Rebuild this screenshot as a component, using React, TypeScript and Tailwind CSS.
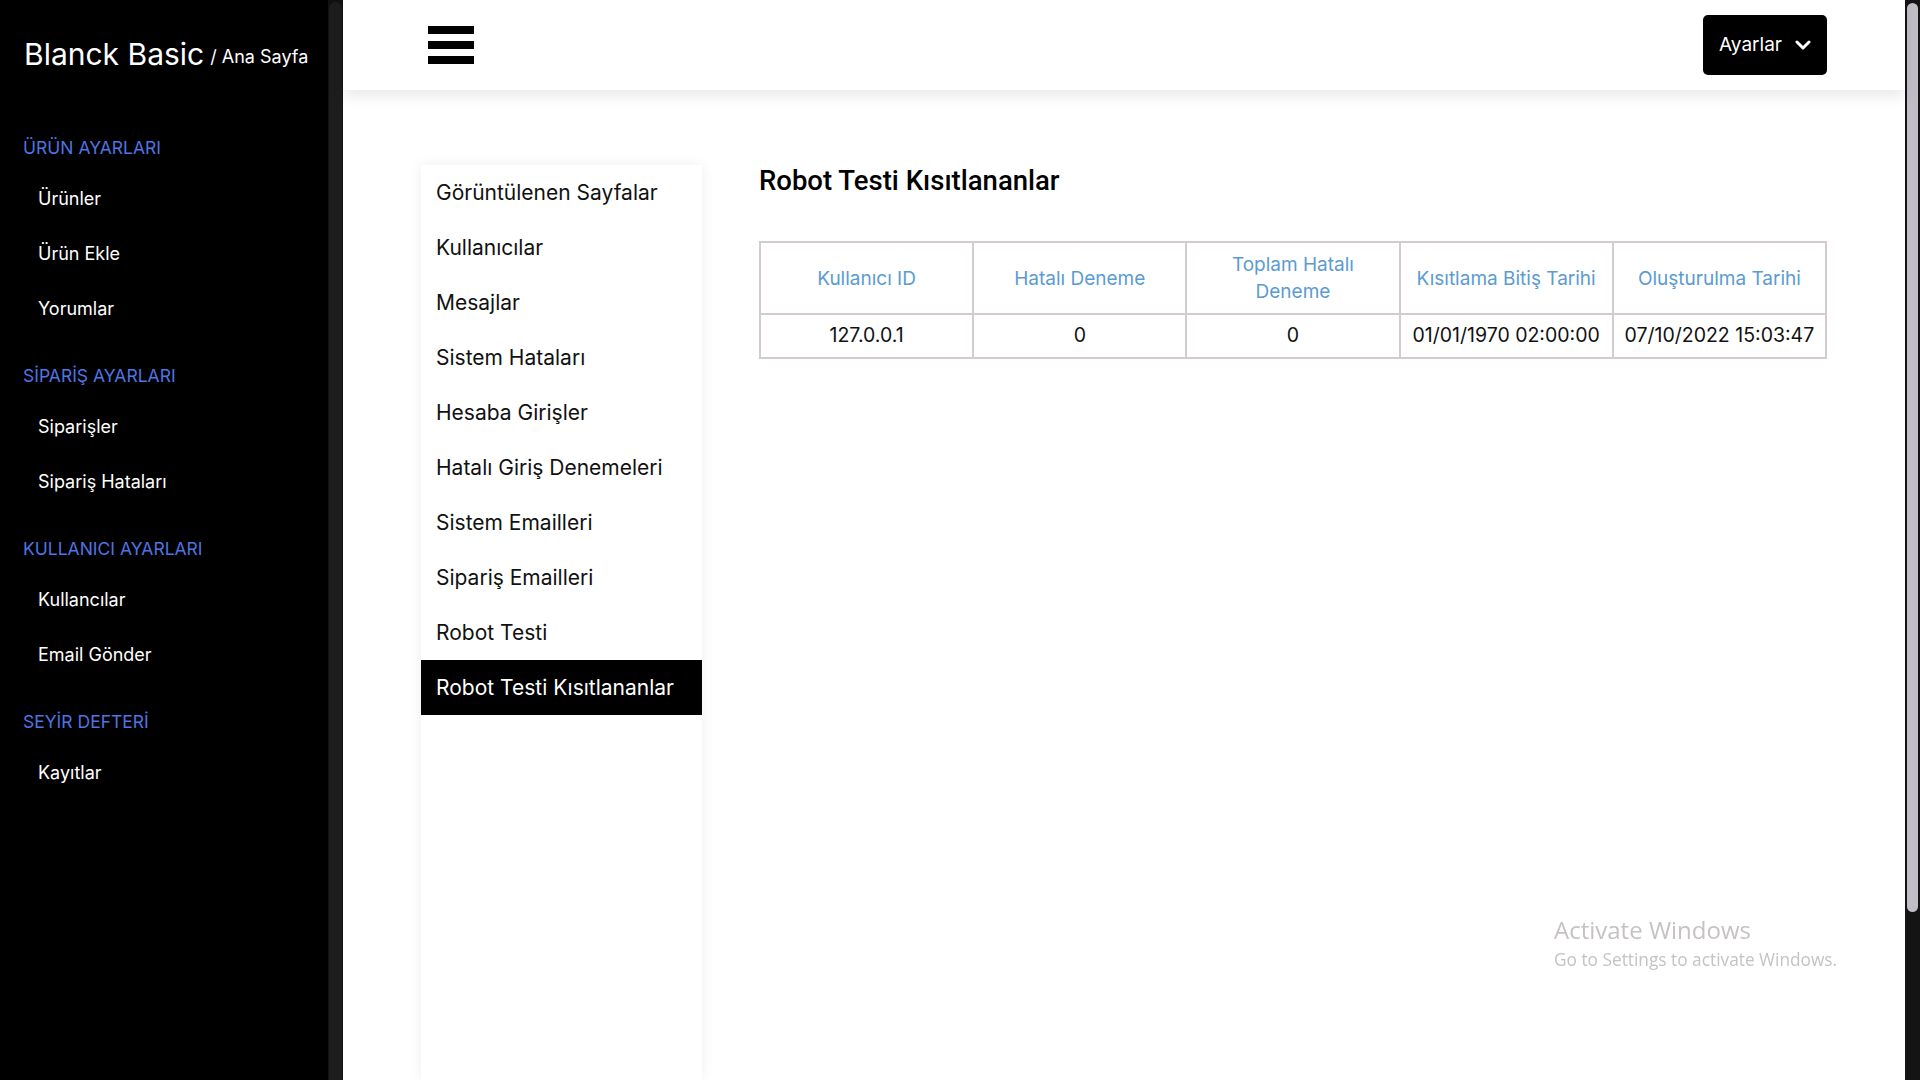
const sections = [
  { title: "ÜRÜN AYARLARI", items: ["Ürünler", "Ürün Ekle", "Yorumlar"] },
  { title: "SİPARİŞ AYARLARI", items: ["Siparişler", "Sipariş Hataları"] },
  { title: "KULLANICI AYARLARI", items: ["Kullancılar", "Email Gönder"] },
  { title: "SEYİR DEFTERİ", items: ["Kayıtlar"] },
];

const logPages = [
  "Görüntülenen Sayfalar",
  "Kullanıcılar",
  "Mesajlar",
  "Sistem Hataları",
  "Hesaba Girişler",
  "Hatalı Giriş Denemeleri",
  "Sistem Emailleri",
  "Sipariş Emailleri",
  "Robot Testi",
  "Robot Testi Kısıtlananlar",
];

const columns = ["Kullanıcı ID", "Hatalı Deneme", "Toplam Hatalı Deneme", "Kısıtlama Bitiş Tarihi", "Oluşturulma Tarihi"];
const rows = [["127.0.0.1", "0", "0", "01/01/1970 02:00:00", "07/10/2022 15:03:47"]];

const Sidebar = () => (
  <aside className="flex h-full w-[343px] shrink-0 bg-black">
    <div className="min-w-0 flex-1">
      <div className="flex h-[108px] items-center whitespace-nowrap pl-[24px] text-white">
        <span className="text-[30px] leading-none">Blanck Basic</span>
        <span className="ml-[6px] mt-[6px] text-[18px] leading-none">/ Ana Sayfa</span>
      </div>
      <nav className="flex flex-col gap-[18px] pt-[18px]">
        {sections.map((s) => (
          <div key={s.title}>
            <div className="flex h-[45px] items-center px-[23px] text-[17.5px] text-[#4f74e3]">{s.title}</div>
            {s.items.map((item) => (
              <a key={item} className="flex h-[55px] items-center px-[38px] text-[18px] text-white">
                {item}
              </a>
            ))}
          </div>
        ))}
      </nav>
    </div>
    {/* sidebar scrollbar */}
    <div className="w-[15px] bg-[#111] px-[1px] pt-[2px]">
      <div className="h-full rounded-t-full bg-[#1e1d1e]"></div>
    </div>
  </aside>
);

const Header = () => (
  <header className="relative z-10 flex h-[90px] shrink-0 items-center justify-between bg-white pl-[85px] pr-[78px] shadow-[0_6px_14px_rgba(0,0,0,0.09)]">
    <button className="flex w-[46px] flex-col gap-[7px]">
      <span className="h-[8px] w-full bg-black"></span>
      <span className="h-[8px] w-full bg-black"></span>
      <span className="h-[8px] w-full bg-black"></span>
    </button>
    <button className="flex h-[60px] w-[124px] items-center justify-center gap-[13px] rounded-[5px] bg-black text-[19px] text-white">
      Ayarlar
      <svg width="16" height="10" viewBox="0 0 16 10" fill="none">
        <polyline points="2,2 8,8 14,2" stroke="white" strokeWidth="3" strokeLinecap="round" strokeLinejoin="round" />
      </svg>
    </button>
  </header>
);

export default function App() {
  return (
    <div className="flex h-[1080px] w-[1920px] overflow-hidden bg-white font-['Inter','Noto_Sans',sans-serif]">
      <Sidebar />
      <main className="flex min-w-0 flex-1 flex-col">
        <Header />
        <div className="flex flex-1 gap-[57px] pl-[78px] pr-[78px] pt-[75px]">
          <ul className="w-[281px] shrink-0 bg-white shadow-[0_0_12px_rgba(0,0,0,0.07)]">
            {logPages.map((p, i) => (
              <li
                key={p}
                className={`flex h-[55px] items-center px-[15px] text-[21px] ${
                  i === logPages.length - 1 ? "bg-black text-white" : "text-[#111]"
                }`}
              >
                {p}
              </li>
            ))}
          </ul>
          <section className="flex-1">
            <h1 className="font-['Roboto',sans-serif] text-[27.5px] font-medium leading-[32px] text-black">
              Robot Testi Kısıtlananlar
            </h1>
            <table className="mt-[44px] w-full table-fixed border-collapse text-center">
              <thead>
                <tr className="h-[72px]">
                  {columns.map((c) => (
                    <th key={c} className="border-2 border-[#d2cccc] px-[8px] text-[19px] font-normal leading-[27px] text-[#5b9bd1]">
                      {c}
                    </th>
                  ))}
                </tr>
              </thead>
              <tbody>
                {rows.map((r, i) => (
                  <tr key={i} className="h-[44px]">
                    {r.map((v, j) => (
                      <td key={j} className="border-2 border-[#d2cccc] px-[4px] text-[19.5px] text-[#111]">
                        {v}
                      </td>
                    ))}
                  </tr>
                ))}
              </tbody>
            </table>
          </section>
        </div>
      </main>
      {/* page scrollbar */}
      <div className="flex w-[15px] shrink-0 flex-col bg-[#141414] px-[2px] pt-[3px]">
        <div className="h-[909px] rounded-full bg-[#c1bdc6]"></div>
      </div>
      {/* windows watermark */}
      <div className="pointer-events-none fixed left-[1554px] top-[915px] font-['Open_Sans',sans-serif] text-[#c6c2c2]">
        <div className="text-[24px] leading-[30px]">Activate Windows</div>
        <div className="mt-[3px] text-[17.3px] leading-[24px]">Go to Settings to activate Windows.</div>
      </div>
    </div>
  );
}
